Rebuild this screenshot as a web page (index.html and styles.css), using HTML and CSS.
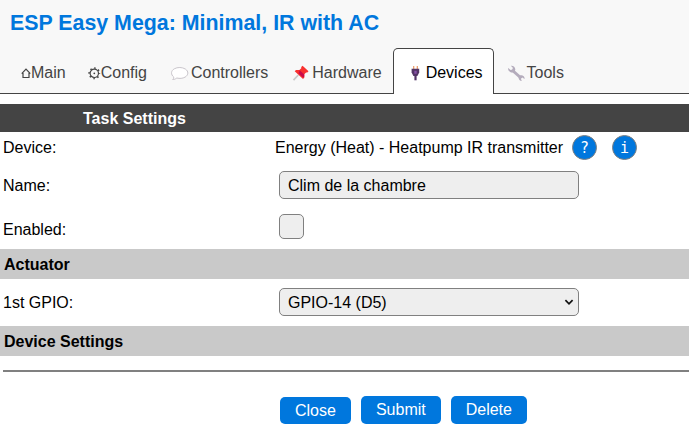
FILE: index.html
```html
<!DOCTYPE html>
<html lang="en">
<head>
<meta charset="utf-8">
<title>ESP Easy Mega</title>
<link rel="stylesheet" href="styles.css">
</head>
<body>
<header class="header">
  <h1 class="title">ESP Easy Mega: Minimal, IR with AC</h1>
  <nav class="menu">
    <a class="tab"><svg class="icon icon-home" viewBox="0 0 10 18"><path d="M.7 9.7 5 5.2l4.3 4.5M2 9v4.5h6V9" fill="none" stroke="#444" stroke-width="1.2"/></svg>Main</a>
    <a class="tab"><svg class="icon icon-gear" viewBox="0 0 13 18"><circle cx="6.3" cy="9.3" r="4.2" fill="none" stroke="#444" stroke-width="1.2"/><circle cx="6.3" cy="9.3" r="5.2" fill="none" stroke="#444" stroke-width="1.5" stroke-dasharray="1.5 2.584" stroke-dashoffset=".75"/><circle cx="6.3" cy="9.3" r=".9" fill="#444"/></svg>Config</a>
    <a class="tab"><svg class="icon" viewBox="0 0 22 18"><path d="M4.8 13.1C1.6 10.5 1.8 6.8 5.3 4.8c3.1-1.8 8-1.7 11 .2 3.5 2.3 3.3 6-.2 8.1-2.4 1.4-5.4 1.6-8.3.9-1.3 1-2.5 1.5-4.1 1.5.8-.7 1.1-1.4 1.1-2.4Z" fill="#fff" stroke="#c9c5cb"/></svg>Controllers</a>
    <a class="tab"><svg class="icon" viewBox="0 0 22 18"><path d="m8.3 11-4.8 5.2" stroke="#c9c9c9" stroke-width="1.7"/><path d="m12.6 1.8 5.9 5.5-1.2 1.2-1.2-.1-1.8 1.9.1 3.2-1.4 1.4-8.3-7.7 1.3-1.3 3.4.2 1.9-1.9-.1-1.1Z" fill="#f8312f"/><path d="m9.6 6.2 4.7 4.4-.2 2.4-1.1.6-4.4-4.2Z" fill="#ca0b4a"/></svg>Hardware</a>
    <a class="tab tab-active"><svg class="icon" viewBox="0 0 22 18"><path d="M9.7 2v4M13.3 2v4" stroke="#ed9b66" stroke-width="1.2"/><path d="M7.6 4.8h7.6v3.6l-1.8 3.6H9.4L7.6 8.4Z" fill="#533566"/><path d="M11.5 10v6.3" stroke="#533566" stroke-width="2.2"/><path d="M10.3 6.8h2.4v3h-2.4Z" fill="#8650a5"/></svg>Devices</a>
    <a class="tab"><svg class="icon" viewBox="0 0 22 18"><path d="m7 6 9 8" stroke="#b4acbc" stroke-width="3"/><path d="M5.8 1.7c2.3-.4 4.6 1.3 4.5 3.9-.1 2.5-2.9 3.7-5.1 2.4C3.6 7.1 2.8 5.4 3.2 4l2.4 2 1.9-.6.3-1.7ZM16.8 17c-2.3-.2-3.7-2.2-3-4.1.7-2 3.3-2.4 4.9-.7.8.8 1 1.8.8 2.7l-2.2-1.4-1.4 1.2Z" fill="#b4acbc"/></svg>Tools</a>
  </nav>
</header>
<main>
  <h2 class="band band-dark">Task Settings</h2>
  <div class="row row-device"><span>Device:</span><div class="value">Energy (Heat) - Heatpump IR transmitter<a class="help">?</a><a class="help">i</a></div></div>
  <div class="row row-name"><span>Name:</span><input class="field" type="text" value="Clim de la chambre"></div>
  <div class="row row-enabled"><span>Enabled:</span><input class="check" type="checkbox"></div>
  <h3 class="band">Actuator</h3>
  <div class="row row-gpio"><span>1st GPIO:</span><div class="select-wrap"><select class="field"><option>GPIO-14 (D5)</option></select><svg class="arrow" viewBox="0 0 10 8"><path d="m1.4 2.2 3.6 3.6 3.6-3.6" fill="none" stroke="#111" stroke-width="1.7"/></svg></div></div>
  <h3 class="band">Device Settings</h3>
  <hr class="rule">
  <div class="actions"><a class="button button-close">Close</a><button class="button">Submit</button><button class="button">Delete</button></div>
</main>
</body>
</html>
```
FILE: styles.css
```css
* { box-sizing: border-box; }
body {
  margin: 0;
  height: 435px;
  overflow: hidden;
  background: #fff;
  color: #000;
  font: 16px/18px "Liberation Sans", Arial, sans-serif;
}
.header {
  display: flex;
  flex-direction: column;
  justify-content: space-between;
  height: 94px;
  background: #f8f8f8;
  border-bottom: 1px solid #444;
}
.title {
  margin: 11px 0 0 10px;
  font-size: 21.36px;
  line-height: 25px;
  color: #0077dd;
}
.menu {
  display: flex;
  padding-left: 10px;
  height: 46px;
  margin-bottom: -1px;
}
.tab {
  display: flex;
  align-items: flex-start;
  padding: 15px 10px 0;
  border: 1px solid transparent;
  border-bottom: 0;
  border-radius: 5px 5px 0 0;
  color: #444;
}
.tab-active {
  background: #fff;
  border-color: #444;
  color: #000;
}
.icon { width: 22px; height: 18px; flex: none; }
.icon-home { width: 10px; }
.icon-gear { width: 13px; }
.band {
  margin: 0;
  padding: 7px 4px 5px;
  height: 30px;
  background: #c9c9c9;
  font-size: 16px;
  line-height: 18px;
}
.band-dark {
  margin-top: 10px;
  padding: 6px 0 0 83px;
  height: 28px;
  background: #444;
  color: #fff;
}
.row {
  display: grid;
  grid-template-columns: 272px 1fr;
  align-items: center;
  padding-left: 3px;
}
.row-device { height: 31px; }
.row-name { height: 45px; }
.row-enabled { height: 41px; padding-top: 3px; }
.row-gpio { height: 47px; }
.value { display: flex; align-items: center; }
.help {
  width: 25px;
  height: 25px;
  margin-left: 9px;
  border: 1px solid gray;
  border-radius: 50%;
  background: #0077dd;
  color: #fff;
  font: 15px/24px "DejaVu Sans Mono", monospace;
  text-align: center;
}
.help + .help { margin-left: 15px; }
.field {
  appearance: none;
  display: block;
  width: 300px;
  height: 28px;
  margin: -2px 0 0 4px;
  padding: 2px 8px 0;
  border: 1px solid gray;
  border-radius: 5px;
  background: #eee;
  color: #000;
  font: inherit;
}
.check {
  appearance: none;
  width: 25px;
  height: 25px;
  margin: -7px 0 0 4px;
  border: 1px solid gray;
  border-radius: 5px;
  background: #eee;
}
.select-wrap { position: relative; width: 304px; }
.arrow {
  position: absolute;
  right: 5px;
  top: 8px;
  width: 10px;
  height: 8px;
}
.rule {
  margin: 14px 0 0 3px;
  height: 2px;
  border: 0;
  background: gray;
}
.actions {
  display: flex;
  align-items: flex-end;
  gap: 10px;
  margin: 24px 0 0 280px;
}
.button {
  height: 28px;
  padding: 0 15px;
  border: 0;
  border-radius: 5px;
  background: #0077dd;
  color: #fff;
  font: inherit;
  line-height: 28px;
}
.button-close { height: 27px; line-height: 27px; }
```
